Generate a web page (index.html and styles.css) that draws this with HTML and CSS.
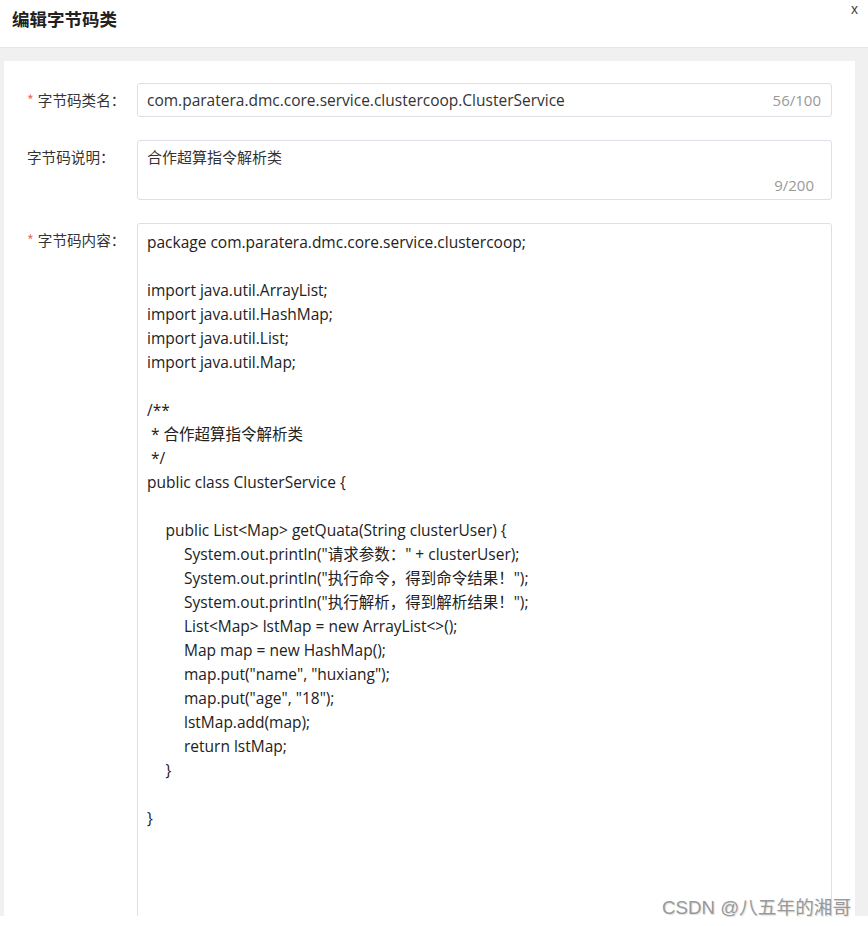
FILE: index.html
```html
<!DOCTYPE html>
<html lang="zh-CN">
<head>
    <meta charset="UTF-8">
    <title>编辑字节码类</title>
    <link rel="stylesheet" href="styles.css">
</head>
<body>
    <div class="dialog">
        <div class="dialog-header">
            <span class="dialog-title">编辑字节码类</span>
            <span class="dialog-close">x</span>
        </div>
        <div class="dialog-body">
            <div class="panel">
                <div class="form-item">
                    <label class="form-label"><span class="required">*</span>字节码类名：</label>
                    <div class="field field-input">
                        <span>com.paratera.dmc.core.service.clustercoop.ClusterService</span>
                        <span class="count">56/100</span>
                    </div>
                </div>
                <div class="form-item">
                    <label class="form-label">字节码说明：</label>
                    <div class="field field-desc">
                        <span class="desc-text">合作超算指令解析类</span>
                        <span class="count count-bottom">9/200</span>
                    </div>
                </div>
                <div class="form-item">
                    <label class="form-label"><span class="required">*</span>字节码内容：</label>
                    <div class="field field-code"><pre class="code">package com.paratera.dmc.core.service.clustercoop;

import java.util.ArrayList;
import java.util.HashMap;
import java.util.List;
import java.util.Map;

/**
 * 合作超算指令解析类
 */
public class ClusterService {

	public List&lt;Map&gt; getQuata(String clusterUser) {
		System.out.println("请求参数：" + clusterUser);
		System.out.println("执行命令，得到命令结果！");
		System.out.println("执行解析，得到解析结果！");
		List&lt;Map&gt; lstMap = new ArrayList&lt;&gt;();
		Map map = new HashMap();
		map.put("name", "huxiang");
		map.put("age", "18");
		lstMap.add(map);
		return lstMap;
	}

}</pre></div>
                </div>
            </div>
        </div>
    </div>
    <div class="watermark">CSDN @八五年的湘哥</div>
</body>
</html>
```

FILE: styles.css
```css
body {
    margin: 0;
    padding: 0;
    background: #ffffff;
    font-family: "Open Sans", "Noto Sans CJK SC", sans-serif;
    color: #333;
    height: 926px;
    overflow: hidden;
    position: relative;
}
.dialog {
    height: 916px;
    overflow: hidden;
    background: #f0f0f0;
}
.dialog-header {
    height: 47px;
    background: #ffffff;
    border-bottom: 1px solid #e6e6e6;
    display: flex;
    justify-content: space-between;
    padding: 0 12px;
}
.dialog-title {
    font-family: "Noto Sans CJK SC", sans-serif;
    font-size: 17.5px;
    font-weight: bold;
    color: #222;
    line-height: 38px;
}
.dialog-close {
    font-family: "Liberation Sans", sans-serif;
    font-size: 14px;
    color: #444;
    line-height: 18px;
    margin-right: -2px;
}
.dialog-body {
    padding: 13px 13px 0 4px;
}
.panel {
    background: #ffffff;
    padding: 22px 23px 0 0;
    height: 900px;
}
.form-item {
    display: flex;
    margin-bottom: 23px;
}
.form-label {
    width: 110px;
    padding-left: 23px;
    text-align: left;
    font-family: "Noto Sans CJK SC", sans-serif;
    font-size: 14.6px;
    line-height: 34px;
    color: #333;
    flex-shrink: 0;
    white-space: nowrap;
}
.required {
    color: #f56c6c;
    margin-right: 4px;
}
.field {
    flex: 1;
    border: 1px solid #dcdfe6;
    border-radius: 3px;
    padding: 0 10px 0 9px;
    font-size: 15.5px;
    color: #333;
    position: relative;
}
.field-input {
    height: 32px;
    line-height: 32px;
    display: flex;
    justify-content: space-between;
}
.count {
    color: #999;
    font-size: 15px;
}
.field-desc {
    height: 58px;
}
.desc-text {
    display: block;
    line-height: 34px;
    margin-top: -1px;
    font-family: "Noto Sans CJK SC", sans-serif;
    font-size: 15px;
}
.count-bottom {
    position: absolute;
    right: 17px;
    bottom: 4px;
    line-height: 20px;
}
.field-code {
    height: 760px;
    padding-top: 6px;
}
.code {
    margin: 0;
    font-family: "Open Sans", "Noto Sans CJK SC", sans-serif;
    font-size: 15.5px;
    line-height: 24px;
    color: #222;
    white-space: pre;
    tab-size: 18.5px;
}
.watermark {
    position: absolute;
    left: 662px;
    top: 892px;
    font-family: "Liberation Sans", "Noto Sans CJK SC", sans-serif;
    font-size: 18.7px;
    color: #999;
    text-shadow: 1px 1px 1px #ddd;
}
```
